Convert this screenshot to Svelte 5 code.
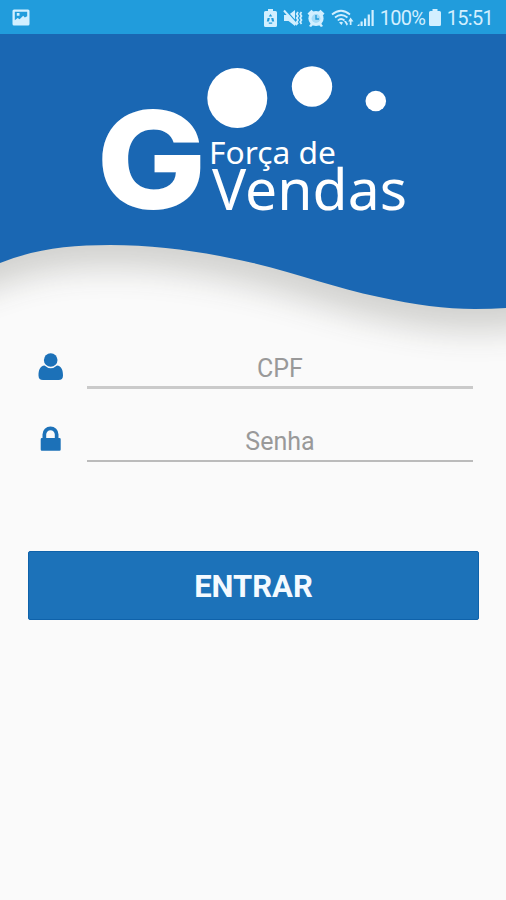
<script lang="ts">
    let cpf = $state("");
    let senha = $state("");
</script>

<svelte:head>
    <title>Força de Vendas</title>
</svelte:head>

<main class="screen">
    <header class="status-bar">
        <svg class="picture" width="18" height="17" viewBox="0 0 18 17">
            <path
                fill-rule="evenodd"
                d="M2 0.5h14a1.5 1.5 0 0 1 1.5 1.5v13a1.5 1.5 0 0 1-1.5 1.5H2A1.5 1.5 0 0 1 .5 15V2A1.5 1.5 0 0 1 2 .5zM2.8 2.8v8.5l2.8-2.4 2 1.4 3.6-3.6 1.6 1.8 2.4-1.3V2.8zM4.8 4h2.7v2.7H4.8z"
            />
        </svg>

        <div class="status-icons">
            <svg class="saver" width="13" height="18" viewBox="0 0 13 18">
                <path
                    d="M4 0h5v2h2.5Q13 2 13 3.500V16.500Q13 18 11.500 18H1.500Q0 18 0 16.500V3.500Q0 2 1.500 2H4z"
                />
                <path
                    class="cut"
                    d="M6.500 5l1.800 2.600h-3.600zM3.600 9h2.200l-.8 3.400H2.800zM9.400 9H7.200l.8 3.400h2.200zM4.800 13.400h3.400v1.300h-3.400z"
                />
            </svg>
            <svg class="mute" width="20" height="18" viewBox="0 0 20 18">
                <path d="M1 6h4.500L12 1v16L5.500 12H1z" />
                <path class="gap" d="M2.500 1L15 15" />
                <path class="slash" d="M1 1.500L14 16" />
                <path
                    class="line"
                    d="M15 3l-1.300 2 1.300 2-1.300 2 1.300 2-1.300 2 1.300 2M18.500 3l-1.300 2 1.300 2-1.300 2 1.300 2-1.300 2 1.300 2"
                />
            </svg>
            <svg class="alarm" width="18" height="18" viewBox="0 0 18 18">
                <circle cx="9" cy="9.500" r="7.600" />
                <path
                    d="M.5 4.500L4.500.700l2 2-4 4zM17.500 4.500L13.500.700l-2 2 4 4zM2 17l3-4 2 2-3 3zM16 17l-3-4-2 2 3 3z"
                />
                <circle class="face" cx="9" cy="9.500" r="4.400" />
                <path class="hands" d="M9 6v4h3" />
            </svg>
            <svg class="wifi" width="23" height="18" viewBox="0 0 23 18">
                <path
                    class="line"
                    d="M1 5.500Q10 -2 19 5.500M4 8.500Q10 3.500 16.500 8.500M6.800 11.500Q10 8.500 13.500 11.500"
                />
                <path d="M8 13.500Q10 12 12 13.500L10.500 16zM15 12h-2l2.800 4.800L17 15zM19.500 8.500l3 4h-2V16h-1.700v-3.500h-1.600z" />
            </svg>
            <svg class="signal" width="17" height="18" viewBox="0 0 17 18">
                <path
                    d="M0 17l2.500-2.500V17zM3.500 12.500h2.200V17H3.500zM7 9.500h2.200V17H7zM10.700 5.500h2.200V17h-2.200zM14.500 1h2.200v16h-2.200z"
                />
            </svg>
            <span class="percent">100%</span>
            <svg class="battery" width="12" height="17" viewBox="0 0 12 17">
                <path
                    d="M3.500 0h5v2H10.500Q12 2 12 3.500V15.500Q12 17 10.500 17H1.500Q0 17 0 15.500V3.500Q0 2 1.500 2h2z"
                />
            </svg>
            <span class="clock">15:51</span>
        </div>
    </header>

    <svg class="hero" width="506" height="346" viewBox="0 34 506 346">
        <defs>
            <filter
                id="wave-shadow"
                filterUnits="userSpaceOnUse"
                x="-100"
                y="0"
                width="706"
                height="420"
            >
                <feGaussianBlur stdDeviation="16" />
            </filter>
        </defs>
        <path
            class="shadow"
            filter="url(#wave-shadow)"
            transform="translate(0 22)"
            d="M-80 0V290L0 263C35 249 70 245 110 245C160 245 205 252 253 263C300 274 335 288 379 297C415 305 445 309 475 309L506 308L590 295V0z"
        />
        <path
            class="wave"
            d="M0 34V263C35 249 70 245 110 245C160 245 205 252 253 263C300 274 335 288 379 297C415 305 445 309 475 309Q492 309 506 308V34z"
        />
        <g class="logo">
            <circle cx="237.300" cy="98" r="30" />
            <circle cx="312" cy="86.500" r="20.200" />
            <circle cx="375.800" cy="101" r="10.300" />
            <text
                class="initial"
                x="96.500"
                y="208.500"
                textLength="110"
                lengthAdjust="spacingAndGlyphs">G</text
            >
            <text
                class="small"
                x="209"
                y="163.500"
                textLength="127"
                lengthAdjust="spacingAndGlyphs">Força de</text
            >
            <text
                class="large"
                x="212"
                y="210"
                textLength="195"
                lengthAdjust="spacingAndGlyphs">Vendas</text
            >
        </g>
    </svg>

    <form class="login" onsubmit={(e) => e.preventDefault()}>
        <label class="field">
            <svg width="26" height="28" viewBox="0 0 26 28">
                <path
                    d="M6.500 12.500C2 13 .5 17 .5 22.500Q.5 27 5 27H20.500Q25 27 25 22.500C25 17 23.500 13 19 12.500Q12.800 18 6.500 12.500z"
                />
                <circle cx="12.700" cy="7" r="6.800" />
            </svg>
            <input type="text" placeholder="CPF" bind:value={cpf} />
        </label>
        <label class="field">
            <svg width="26" height="28" viewBox="0 0 26 28">
                <path
                    fill-rule="evenodd"
                    d="M4.500 12V8.500a8 8 0 0 1 16 0V12h1Q22.700 12 22.700 13.200V23.500Q22.700 24.700 21.500 24.700H3.900Q2.700 24.700 2.700 23.500V13.200Q2.700 12 3.900 12zM8.200 12h8.600V8.500a4.300 4.300 0 0 0-8.600 0z"
                />
            </svg>
            <input
                class="password"
                type="password"
                placeholder="Senha"
                bind:value={senha}
            />
        </label>
        <button type="submit">ENTRAR</button>
    </form>
</main>

<style>
    :global(body) {
        margin: 0;
        background: #fafafa;
    }

    .screen {
        width: 506px;
        height: 900px;
        overflow: hidden;
        background: #fafafa;
        font-family: Roboto, sans-serif;
    }

    .screen svg {
        display: block;
        flex: none;
    }

    .status-bar {
        box-sizing: border-box;
        display: flex;
        align-items: center;
        justify-content: space-between;
        height: 34px;
        padding: 1px 13px 0 12px;
        background: #219cdc;
        color: #d2efff;
        fill: #d2efff;
    }

    .status-icons {
        display: flex;
        align-items: center;
    }

    .mute {
        margin-left: 6px;
    }

    .alarm {
        margin-left: 4px;
    }

    .wifi {
        margin-left: 6px;
    }

    .signal {
        margin-left: 3px;
    }

    .percent,
    .clock {
        font-size: 20px;
        line-height: 24px;
        letter-spacing: -0.7px;
    }

    .percent {
        width: 45px;
        margin-left: 6px;
    }

    .battery {
        margin-left: 4px;
    }

    .clock {
        margin-left: 6px;
    }

    .cut {
        fill: #219cdc;
    }

    .line,
    .slash,
    .gap,
    .hands {
        fill: none;
        stroke: #d2efff;
        stroke-width: 1.7;
    }

    .slash {
        stroke-width: 2;
    }

    .gap {
        stroke: #219cdc;
        stroke-width: 1.5;
    }

    .face {
        fill: #a6dbf7;
    }

    .hands {
        stroke: #219cdc;
        stroke-width: 1.4;
    }

    .hero {
        margin-bottom: -36px;
    }

    .wave {
        fill: #1a67b3;
    }

    .shadow {
        fill: #3c3c30;
        opacity: 0.21;
    }

    .logo {
        fill: #fff;
    }

    .initial {
        font: 800 136px Inter, sans-serif;
    }

    .small {
        font: 400 31px "Noto Sans", sans-serif;
    }

    .large {
        font: 400 57px "Noto Sans", sans-serif;
    }

    .login {
        position: relative;
        display: flex;
        flex-direction: column;
        padding: 0 27px 0 28px;
    }

    .field {
        display: flex;
        align-items: center;
        gap: 23px;
        height: 45px;
        margin-bottom: 28px;
        padding: 0 6px 0 10px;
    }

    .field svg {
        fill: #1c71b8;
    }

    input {
        box-sizing: border-box;
        flex: 1;
        min-width: 0;
        height: 45px;
        padding: 7px 0 0;
        border: 0;
        border-bottom: 3px solid #cacaca;
        outline: none;
        background: transparent;
        color: #444;
        font: 400 25px Roboto, sans-serif;
        text-align: center;
    }

    .password {
        padding-top: 5px;
        border-bottom: 2px solid #bbb;
    }

    input::placeholder {
        color: #999;
        opacity: 1;
    }

    button {
        height: 69px;
        margin-top: 60.5px;
        padding: 3px 0 0;
        border: 1px solid #0f62aa;
        border-radius: 2px;
        background: #1c72b9;
        color: #f4faff;
        font: 700 31px Roboto, sans-serif;
    }
</style>
